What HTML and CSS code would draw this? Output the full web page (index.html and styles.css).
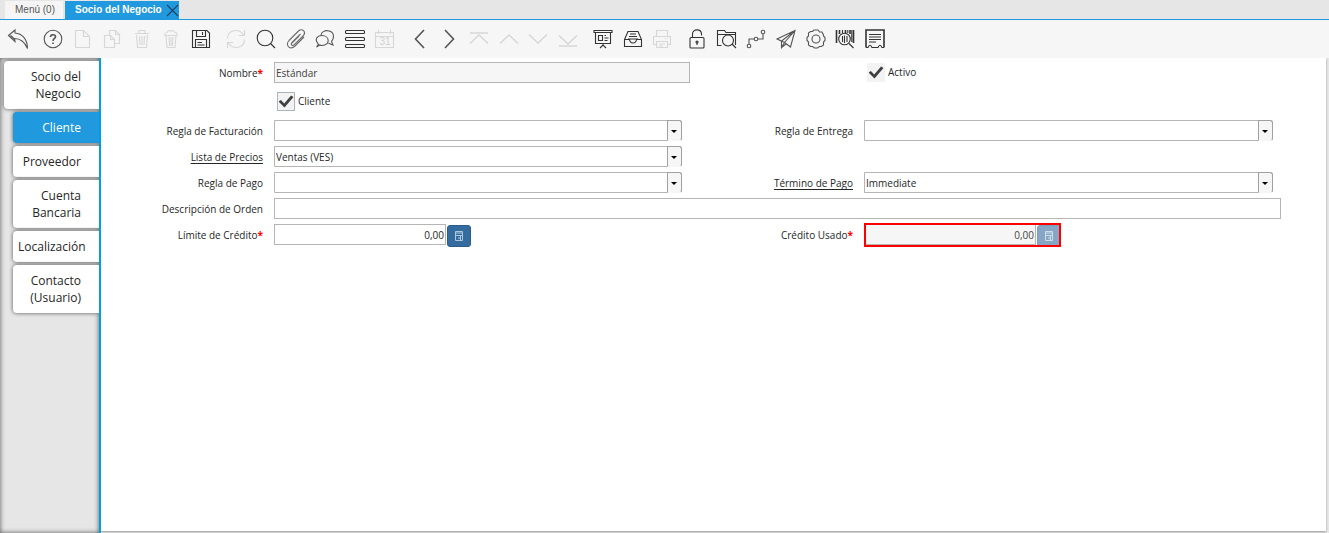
FILE: index.html
```
<!DOCTYPE html>
<html lang="es">
<head>
    <meta charset="UTF-8">
    <meta name="viewport" content="width=device-width, initial-scale=1.0">
    <title>Socio del Negocio</title>
    <link rel="stylesheet" href="styles.css">
</head>
<body>
    <nav class="window-tabs">
        <a href="#" class="window-tab">Menú (0)</a>
        <div class="window-tab active">
            <a href="#">Socio del Negocio</a>
            <button type="button" class="close-tab" aria-label="Cerrar">
                <svg width="13" height="13" viewBox="0 0 13 13"><path d="M1 1L12 12M12 1L1 12"/></svg>
            </button>
        </div>
    </nav>

    <div class="toolbar">
        <div class="tools">
            <button type="button" aria-label="Deshacer"><svg viewBox="0 0 24 24"><path d="M2.500 8.500L9 3L9 6C16 6.500 21.500 12 21.500 21.500C18.500 14.500 14 11.500 8.500 11.500L9 14.500ZM4.500 8.500L8.500 12"/></svg></button>
        </div>
        <div class="tools tools-edit">
            <button type="button" aria-label="Ayuda"><svg viewBox="0 0 24 24"><circle cx="12" cy="12" r="8.800"/><path class="bold" d="M9.500 10C9.500 7 14.500 7 14.500 9.800C14.500 11.500 12 11.500 12 14M12 15.500V17"/></svg></button>
            <button type="button" aria-label="Nuevo" disabled><svg viewBox="0 0 24 24"><path d="M4.500 3.500H12.500L18.500 9.500V20.500H4.500ZM12.500 3.500V9.500H18.500"/></svg></button>
            <button type="button" aria-label="Copiar" disabled><svg viewBox="0 0 24 24"><path d="M9.500 8V3.500H15.500L19.500 7.500V16.500H14.500M15.500 3.500V7.500H19.500M4.500 8.500H10.500L14.500 12.500V20.500H4.500ZM10.500 8.500V12.500H14.500"/></svg></button>
            <button type="button" aria-label="Borrar" disabled><svg viewBox="0 0 24 24"><path d="M5 6.500H19M9 6V3.500H15V6M6.500 8L7.500 20.500H16.500L17.500 8M9.500 9L10 18M12 9V18M14.500 9L14 18"/></svg></button>
            <button type="button" aria-label="Borrar selección" disabled><svg viewBox="0 0 24 24"><path d="M6 8.500Q5 6 8 5.500Q10 2 12 4.500Q14 2 16 5.500Q19 6 18 8.500ZM7 9L8 20.500H16L17 9M10 10L10.500 19M12 10V19M14 10L13.500 19"/></svg></button>
            <button type="button" aria-label="Guardar"><svg viewBox="0 0 24 24" class="dark"><path d="M3.500 3.500H18L20.500 6V20.500H3.500ZM7.500 3.500V9.500H16.500V3.500M13.500 5V8M6.500 20.500V12.500H17.500V20.500M8.500 15.500H13M8.500 18H15.500"/></svg></button>
        </div>
        <div class="tools tools-record">
            <button type="button" aria-label="Refrescar" disabled><svg viewBox="0 0 24 24"><path d="M3.500 11.500C3.500 3 15 .5 19.500 8M20.500 3V8.500H15M20.500 12.500C20.500 21 9 23.500 4.500 16M3.500 21V15.500H9"/></svg></button>
            <button type="button" aria-label="Buscar"><svg viewBox="0 0 24 24" class="dark"><circle cx="11" cy="11" r="7.800"/><path d="M16.500 16.500L21 21"/></svg></button>
            <button type="button" aria-label="Adjunto"><svg viewBox="0 0 24 24" class="light"><path d="M16.500 7L8 15.500C6 17.500 8.500 19.500 10.300 17.700L19 9C23 5 18 .5 14.500 4L5 13.500C.5 18.500 6.500 23.500 11 19L20 10M8 16L15 9"/></svg></button>
            <button type="button" aria-label="Chat"><svg viewBox="0 0 24 24"><path d="M8 8C9 2 20.500 2 20.500 9.500C20.500 12 19.500 13.500 18.500 14.500L20 18L15.500 16.200M5.500 17.300C1 12.500 4 8.500 9 8.500C17 8.500 17.500 18.500 9 18.500Q7.500 18.500 6.800 18L3.500 20Z"/></svg></button>
            <button type="button" aria-label="Cuadrícula"><svg viewBox="0 0 24 24" class="dark"><rect x="2.500" y="3.500" width="19" height="3" rx="1"/><rect x="2.500" y="10.500" width="19" height="3" rx="1"/><rect x="2.500" y="17.500" width="19" height="3" rx="1"/></svg></button>
            <button type="button" aria-label="Historial" disabled><svg viewBox="0 0 24 24"><path d="M2.500 5.500H20.500V20.500H2.500ZM2.500 9.500H20.500M5.500 2.500V7M17.500 2.500V7"/><text x="12" y="18">31</text></svg></button>
        </div>
        <div class="tools tools-tab">
            <button type="button" aria-label="Anterior"><svg viewBox="0 0 24 24"><path class="bold" d="M16 3L7.500 12L16 21"/></svg></button>
            <button type="button" aria-label="Siguiente"><svg viewBox="0 0 24 24"><path class="bold" d="M8 3L16.500 12L8 21"/></svg></button>
        </div>
        <div class="tools tools-nav">
            <button type="button" aria-label="Primero" disabled><svg viewBox="0 0 24 24"><path class="bold" d="M3 6H21M3 16.500L12 8L21 16.500"/></svg></button>
            <button type="button" aria-label="Registro anterior" disabled><svg viewBox="0 0 24 24"><path class="bold" d="M3 16.500L12 8L21 16.500"/></svg></button>
            <button type="button" aria-label="Registro siguiente" disabled><svg viewBox="0 0 24 24"><path class="bold" d="M3 7.500L12 16L21 7.500"/></svg></button>
            <button type="button" aria-label="Último" disabled><svg viewBox="0 0 24 24"><path class="bold" d="M3 8.500L12 17L21 8.500M3 19H21"/></svg></button>
        </div>
        <div class="tools tools-print">
            <button type="button" aria-label="Informe"><svg viewBox="0 0 24 24" class="dark"><path d="M3 3.500H21V5.500H3ZM4.500 6V16.500H19.500V6M7.500 8.500H11.500V13.500H7.500ZM13.500 8.500H15M13.500 11H17.500M13.500 13.500H16.500M12 17V18M9 21L12 18L15 21"/></svg></button>
            <button type="button" aria-label="Archivo"><svg viewBox="0 0 24 24" class="dark"><path d="M3.500 12.500L7 4.500H17L20.500 12.500V19.500H3.500ZM3.500 12.500H8.500Q9 16 12 16T15.500 12.500H20.500M9 7H15M8 9.500H16M7 12H17"/></svg></button>
            <button type="button" aria-label="Imprimir" disabled><svg viewBox="0 0 24 24"><path d="M6.500 9V3.500H17.500V9M6 17.500H3.500V9.500H20.500V17.500H18M6.500 14.500H17.500V20.500H6.500ZM9 17H15M9 19H13M14.500 11.500H15.500M17 11.500H18"/></svg></button>
        </div>
        <div class="tools tools-process">
            <button type="button" aria-label="Bloqueo"><svg viewBox="0 0 24 24" class="dark"><rect x="5" y="10.500" width="14" height="10.500" rx="1"/><path d="M7.500 10V7C7.500 1.500 16.500 1.500 16.500 7V8.500M12 15.500V18"/><circle cx="12" cy="15" r="1"/></svg></button>
            <button type="button" aria-label="Acercar"><svg viewBox="0 0 24 24" class="dark"><path d="M6.500 18.500H2.500V3.500H9.500L11 5.500H20.500V18M2.500 7.500H20.500M17 17L21 21"/><circle cx="13" cy="13.500" r="5.500"/></svg></button>
            <button type="button" aria-label="Flujo de trabajo"><svg viewBox="0 0 24 24"><circle cx="5" cy="19" r="1.800"/><circle cx="12" cy="12" r="1.800"/><circle cx="19" cy="5" r="1.800"/><path d="M5 17V12H10M14 12H19V7"/></svg></button>
            <button type="button" aria-label="Solicitudes"><svg viewBox="0 0 24 24"><path d="M3 12L21 3.500L16.500 20L10.500 15.500ZM21 3.500L7.500 14V20.500L10.500 15.500L21 3.500M7.500 14L3 12M7.500 20.500L12 17"/></svg></button>
            <button type="button" aria-label="Proceso"><svg viewBox="0 0 24 24"><path d="M10 3H14L15.500 5L18 5L19.500 8L19.500 9L21 10.500V13.500L19.500 15V18L17.500 19.500H15.500L13.500 21H10.500L8.500 19.500H6.500L4.500 18V15L3 13.500V10.500L4.500 9V6L6.500 4.500H8.500Z"/><circle cx="12" cy="12" r="4"/></svg></button>
            <button type="button" aria-label="Información de producto"><svg viewBox="0 0 24 24" class="dark"><path class="bold" d="M3.500 3V16M6.500 3V7M12.500 3V6M17 3V7M20.500 3V16"/><path d="M9.500 3V6M14.800 3V6M18.800 3V15M9.500 9V15M11.500 8.500V16M14 9V15M16 16.500L20.500 21"/><circle cx="11.500" cy="12" r="5.800"/></svg></button>
            <button type="button" aria-label="Recibo"><svg viewBox="0 0 24 24" class="dark"><path class="bold" d="M3 20.500V3H21V20.500"/><path d="M3 20.500H5Q7 16 9 20.500H15Q17 16 19 20.500H21M6 7.500H18M6 10H18M6 12.500H18M6 15H13"/></svg></button>
        </div>
    </div>

    <div class="content">
        <nav class="side-tabs">
            <a href="#" class="side-tab parent">Socio del Negocio</a>
            <a href="#" class="side-tab active">Cliente</a>
            <a href="#" class="side-tab">Proveedor</a>
            <a href="#" class="side-tab">Cuenta Bancaria</a>
            <a href="#" class="side-tab">Localización</a>
            <a href="#" class="side-tab">Contacto (Usuario)</a>
        </nav>

        <main class="panel">
            <form class="form-grid">
                <label for="nombre" class="first">Nombre<span class="required">*</span></label>
                <input type="text" id="nombre" value="Estándar" readonly>
                <div class="check right">
                    <input type="checkbox" id="activo" class="plain" checked>
                    <label for="activo">Activo</label>
                </div>

                <div class="check tall">
                    <input type="checkbox" id="cliente" checked>
                    <label for="cliente">Cliente</label>
                </div>

                <label for="facturacion" class="first">Regla de Facturación</label>
                <div class="combo"><select id="facturacion"><option></option></select></div>
                <label for="entrega">Regla de Entrega</label>
                <div class="combo"><select id="entrega"><option></option></select></div>

                <label for="precios" class="first link">Lista de Precios</label>
                <div class="combo"><select id="precios"><option>Ventas (VES)</option></select></div>

                <label for="pago" class="first">Regla de Pago</label>
                <div class="combo"><select id="pago"><option></option></select></div>
                <label for="termino" class="link">Término de Pago</label>
                <div class="combo"><select id="termino"><option>Immediate</option></select></div>

                <label for="descripcion" class="first">Descripción de Orden</label>
                <input type="text" id="descripcion" class="wide">

                <label for="limite" class="first">Límite de Crédito<span class="required">*</span></label>
                <div class="number">
                    <input type="text" id="limite" value="0,00">
                    <button type="button" aria-label="Calculadora"><svg width="8" height="10" viewBox="0 0 8 10"><path d="M.5 .5H7.500V9.500H.5ZM1 2H7M.5 4.500H7.500M3 7H5.500M5.500 5V9"/></svg></button>
                </div>
                <label for="usado">Crédito Usado<span class="required">*</span></label>
                <div class="number highlight">
                    <input type="text" id="usado" value="0,00" readonly>
                    <button type="button" aria-label="Calculadora" disabled><svg width="8" height="10" viewBox="0 0 8 10"><path d="M.5 .5H7.500V9.500H.5ZM1 2H7M.5 4.500H7.500M3 7H5.500M5.500 5V9"/></svg></button>
                </div>
            </form>
        </main>
    </div>
</body>
</html>
```
FILE: styles.css
```
:root {
    --blue: #2099df;
    --line-blue: #00a0dd;
    --field-border: #b5b5b5;
    --readonly: #f6f6f6;
    --text: #262626;
}

*,
*::before,
*::after {
    box-sizing: border-box;
}

body {
    margin: 0;
    min-height: 100vh;
    display: flex;
    flex-direction: column;
    background: #e6e6e6;
    color: var(--text);
    font-family: "Open Sans", "Noto Sans", sans-serif;
    font-size: 10px;
}

a {
    color: inherit;
    text-decoration: none;
}

button,
input,
select {
    font: inherit;
    color: inherit;
    margin: 0;
}

/* window tabs */
.window-tabs {
    display: flex;
    gap: 2px;
    height: 20px;
    padding: 1px 5px 0;
    border-bottom: 1px solid var(--blue);
    font-family: "Liberation Sans", Arial, sans-serif;
    line-height: 18px;
}

.window-tab {
    padding: 0 8px 0 10px;
    background: #f5f5f5;
    color: #555;
}

.window-tab.active {
    display: flex;
    align-items: center;
    gap: 4px;
    padding: 0 0 0 10px;
    background: var(--blue);
    color: #fff;
    font-weight: bold;
}

.close-tab {
    display: flex;
    padding: 0;
    border: none;
    background: none;
}

.close-tab svg {
    stroke: #1c4564;
    stroke-width: 1.2;
}

/* toolbar */
.toolbar {
    display: flex;
    align-items: center;
    gap: 11px;
    height: 38px;
    padding: 0 6px;
    background: #f6f6f6;
}

.tools {
    display: flex;
    justify-content: space-between;
}

.tools-edit {
    width: 172px;
}

.tools-record {
    width: 173px;
}

.tools-tab {
    width: 53px;
}

.tools-nav {
    width: 113px;
    margin-left: -5px;
}

.tools-print {
    width: 83px;
}

.tools-process {
    width: 202px;
}

.tools button {
    width: 24px;
    height: 24px;
    padding: 0;
    border: none;
    background: none;
}

.tools svg {
    display: block;
    width: 24px;
    height: 24px;
    fill: none;
    stroke: #555;
    stroke-width: 1.1;
}

.tools svg.dark {
    stroke: #333;
}

.tools svg.light {
    stroke: #6c6c6c;
}

.tools .bold {
    stroke-width: 1.6;
}

.tools button:disabled svg {
    stroke: #d7d7d7;
}

.tools text {
    font-family: "Liberation Sans", Arial, sans-serif;
    font-size: 10px;
    text-anchor: middle;
    fill: #d0d0d0;
    stroke: none;
}

/* side tabs */
.content {
    flex: 1;
    display: flex;
}

.side-tabs {
    flex: none;
    display: flex;
    flex-direction: column;
    gap: 3px;
    width: 101px;
    padding: 3px 0 3px 13px;
    border-right: 2px solid var(--line-blue);
    box-shadow: inset 0 0 5px #555;
    font-size: 12px;
    line-height: 17px;
}

.side-tab {
    padding: 7px 18px 7px 5px;
    border-radius: 4px 0 0 4px;
    background: #fff;
    box-shadow: 0 0 4px #555;
    clip-path: inset(-4px 0 -4px -4px);
    text-align: right;
}

.side-tab.parent {
    margin-left: -9px;
}

.side-tab.active {
    background: var(--blue);
    color: #fff;
    font-weight: 500;
}

/* form */
.panel {
    flex: 1;
    min-width: 0;
    margin: 0 3px 2px 0;
    padding: 4px 45px 4px 0;
    background: #fff;
    box-shadow: 0 1px 2px #999;
    clip-path: inset(0 -3px -3px 0);
}

.form-grid {
    display: grid;
    grid-template-columns: 173fr 416fr 174fr 417fr;
    gap: 5px 0;
    line-height: 21px;
}

.form-grid > label {
    height: 21px;
    padding: 1px 11px 0 0;
    text-align: right;
}

.form-grid > .first {
    grid-column: 1;
}

.link {
    text-decoration: underline;
    text-underline-offset: 2px;
}

.required {
    color: red;
    font-weight: bold;
}

.form-grid input[type="text"],
.combo select {
    width: 100%;
    height: 21px;
    padding: 1px 1px 0;
    border: 1px solid var(--field-border);
    border-radius: 0;
    background: #fff;
    outline: none;
}

.form-grid input[readonly] {
    background: var(--readonly);
    color: #444;
}

.form-grid .wide {
    grid-column: 2 / -1;
}

.check {
    grid-column: 2;
    display: flex;
    align-items: center;
    gap: 3px;
    padding-left: 3px;
}

.check.tall {
    height: 27px;
}

.check.right {
    grid-column: 4;
}

.check input {
    appearance: none;
    display: flex;
    align-items: center;
    justify-content: center;
    width: 18px;
    height: 19px;
    border: 1px solid #abb5be;
    background: #f3f3f3;
}

.check input.plain {
    border-color: #f3f3f3;
}

.check input:checked::before {
    content: "";
    width: 15px;
    height: 13px;
    background: #404040;
    clip-path: polygon(0 50%, 16% 38%, 38% 65%, 84% 4%, 100% 16%, 40% 96%);
}

.combo {
    position: relative;
    width: calc(100% - 8px);
    height: 21px;
}

.combo select {
    display: block;
    appearance: none;
    padding: 0 1px;
    border-radius: 0 3px 3px 0;
}

.combo::before {
    content: "";
    position: absolute;
    right: 0;
    top: 0;
    width: 15px;
    height: 21px;
    border: 1px solid #a0a0a0;
    border-bottom-color: #f6f6f6;
    border-radius: 0 3px 3px 0;
    background: #f6f6f6;
    pointer-events: none;
}

.combo::after {
    content: "";
    position: absolute;
    right: 5px;
    top: 10px;
    border: 3px solid transparent;
    border-top-color: #000;
    border-bottom: none;
    pointer-events: none;
}

.number {
    display: flex;
    gap: 1px;
    width: 197px;
    height: 24px;
    margin-top: -1px;
    padding-top: 1px;
}

.number input[type="text"] {
    flex: 1;
    min-width: 0;
    text-align: right;
}

.number button {
    display: flex;
    align-items: center;
    justify-content: center;
    width: 24px;
    height: 22px;
    margin-top: 1px;
    padding: 0;
    border: 1px solid #2a5d8a;
    border-radius: 3px;
    background: #356c9f;
}

.number svg {
    fill: none;
    stroke: #b0c8dc;
}

.number button:disabled {
    opacity: 0.6;
}

/* the outline has to stay above the faded button */
.number.highlight {
    position: relative;
    z-index: 0;
    outline: 2px solid red;
    outline-offset: -2px;
}

.number.highlight button {
    z-index: -1;
}
```
